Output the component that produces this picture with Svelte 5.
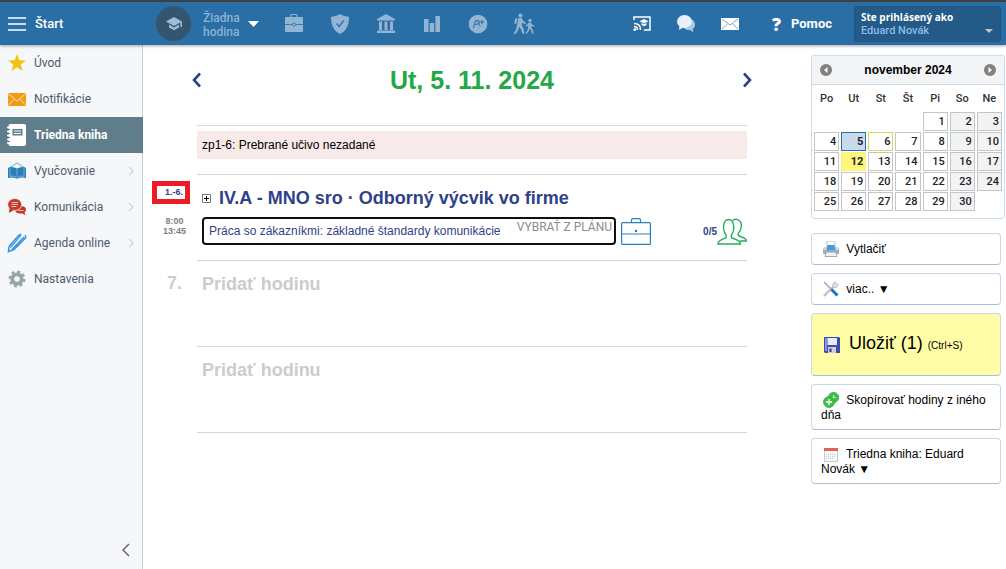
<script lang="ts">
  type Day = { n: number; kind?: "selected" | "today" | "marked" };

  const menu = [
    { id: "star", label: "Úvod" },
    { id: "mail", label: "Notifikácie" },
    { id: "book", label: "Triedna kniha", active: true },
    { id: "teach", label: "Vyučovanie", sub: true },
    { id: "chat", label: "Komunikácia", sub: true },
    { id: "pen", label: "Agenda online", sub: true },
    { id: "gear", label: "Nastavenia" },
  ];

  const tools = [
    { id: "case", label: "Učivo" },
    { id: "shield", label: "Dochádzka" },
    { id: "bank", label: "Škola" },
    { id: "bars", label: "Výsledky" },
    { id: "grade", label: "Známky" },
    { id: "walk", label: "Akcie" },
  ];

  const weekdays = ["Po", "Ut", "St", "Št", "Pi", "So", "Ne"];
  const kinds: Record<number, Day["kind"]> = {
    5: "selected",
    6: "marked",
    12: "today",
  };

  // 1 November 2024 is a Friday
  const cells: (Day | null)[] = Array.from({ length: 35 }, (_, i) => {
    const n = i - 3;
    return n >= 1 && n <= 30 ? { n, kind: kinds[n] } : null;
  });
  const weeks = [0, 1, 2, 3, 4].map((w) => cells.slice(w * 7, w * 7 + 7));

  let topic = $state("Práca so zákazníkmi: základné štandardy komunikácie");
</script>

<div class="page">
  <header class="topbar">
    <button class="brand">
      <svg width="18" height="14" viewBox="0 0 18 14" stroke="#fff" stroke-width="1.600">
        <path d="M0 1h18M0 7h18M0 13h18" />
      </svg>
      <span>Štart</span>
    </button>

    <button class="lesson">
      <span class="lesson-icon">
        <svg width="16" height="14" viewBox="0 0 16 14" fill="#9dbdd6">
          <path d="M8 0L0 4.5 8 9l6.4-3.6V10H16V4.5z" />
          <path d="M3 7.6v2.9L8 13.3l5-2.8V7.6L8 10.4z" />
        </svg>
      </span>
      <span class="lesson-text">Žiadna<br />hodina</span>
      <svg width="11" height="6" viewBox="0 0 11 6" fill="#fff"><path d="M0 0h11L5.500 6z" /></svg>
    </button>

    <nav class="tools" aria-label="Nástroje">
      {#each tools as tool}
        <a href="#{tool.id}" aria-label={tool.label}>
          <svg width="22" height="22" viewBox="0 0 22 22" fill="#92b5d3">
            {#if tool.id === "case"}
              <path d="M8 4V2.500Q8 1.500 9 1.500h4q1 0 1 1V4" fill="none" stroke="#92b5d3" stroke-width="1.200" />
              <rect x="2" y="4" width="18" height="15" rx="1" />
              <path d="M2 11.500h18" stroke="#2a6ea6" stroke-width=".8" />
              <circle cx="11" cy="11.500" r="1.500" stroke="#2a6ea6" stroke-width=".8" />
            {:else if tool.id === "shield"}
              <path d="M11 1c3 2 6 2.700 9 2.700 0 9-3 14.500-9 17.300-6-2.800-9-8.300-9-17.300C5 3.700 8 3 11 1z" />
              <path d="M7.500 10.500l2.700 3 4.600-6.200" fill="none" stroke="#2a6ea6" stroke-width="1.300" />
            {:else if tool.id === "bank"}
              <path d="M11 1l9 5v1.500H2V6zM4 8.500h3V17H4zM9.500 8.500h3V17h-3zM15 8.500h3V17h-3zM2 17.500h18V20H2z" />
            {:else if tool.id === "bars"}
              <path d="M3 6h4.500v13H3zM8.700 10h4.500v9H8.700zM14.400 3h4.600v16h-4.600z" />
            {:else if tool.id === "grade"}
              <circle cx="11" cy="11" r="9.300" />
              <path d="M6.500 15l1.700-7c1.500-.8 3 0 4.800 5.500M7.500 11.500l4.500-.7M8.500 8c3-1.500 5 0 3.500 2.500M13 9h4M15 7v4" fill="none" stroke="#2a6ea6" />
            {:else}
              <circle cx="7.500" cy="2.500" r="2.100" />
              <circle cx="17" cy="7.300" r="1.600" />
              <path d="M5.500 5h3l2 3 2.500 2.200-1 1.300-2.800-2-.3 3 1.600 3 1 5H9.300L8.200 16.500 6 14l-1 3.500L2.500 21H.5L3 16.500z" />
              <path d="M2.500 5l2 .5L3.200 11l-2-.5z" />
              <path d="M15.800 9.500h2l1.500 2.300 2.200 1-.5 1-2.600-.8v2l1.500 2 .8 3.500h-1.600l-.8-3-1.800-1.700-.7 2.500-2 2.200h-1.600l2.300-3.200.8-5-1.800 1.500-.8-.8z" />
            {/if}
          </svg>
        </a>
      {/each}
    </nav>

    <nav class="quick" aria-label="Rýchle odkazy">
      <a href="#cast" aria-label="Projekcia">
        <svg width="18" height="16" viewBox="0 0 18 16" fill="none" stroke="#fff" stroke-width="1.500">
          <path d="M1 4V1h16v13h-6" />
          <path d="M1 7.500c4 0 6.500 2.500 6.500 6.500M1 10.500c2 0 3.500 1.500 3.500 3.500" />
          <circle cx="1.800" cy="13.600" r=".7" />
          <path d="M11 3l4.500 2.200L11 7.500 6.500 5.200zM8.500 7v2L11 10.300 13.500 9V7L11 8.300z" fill="#fff" stroke="none" />
        </svg>
      </a>
      <a href="#sms" aria-label="Správy">
        <svg width="18" height="18" viewBox="0 0 18 18">
          <path d="M12 4c4 0 6 2.500 6 5.500 0 2-.8 3.500-2.200 4.500l.6 3.500-3.400-2.500C9 15.500 6 13 6 10z" fill="#a9c8e2" />
          <ellipse cx="7.500" cy="6.500" rx="7.500" ry="6.500" fill="#e9f2fa" />
          <path d="M2.500 10L2 15l5-3z" fill="#e9f2fa" />
        </svg>
      </a>
      <a href="#mail" aria-label="Pošta">
        <svg width="18" height="12" viewBox="0 0 18 12">
          <path d="M0 0h18v12H0z" fill="#fff" />
          <path d="M1 1l8 6 8-6M1 11l5.500-5M17 11l-5.500-5" fill="none" stroke="#7fa6c9" />
        </svg>
      </a>
      <a class="help" href="#help"><span class="mark">?</span>Pomoc</a>
    </nav>

    <button class="user">
      <span class="user-label">Ste prihlásený ako</span>
      <span class="user-name">
        Eduard Novák
        <svg width="8" height="4" viewBox="0 0 8 4" fill="#c9c5bd"><path d="M0 0h8L4 4z" /></svg>
      </span>
    </button>
  </header>

  <div class="body">
    <aside class="sidebar">
      <nav aria-label="Hlavné menu">
        {#each menu as item}
          <a class="item" class:active={item.active} href="#{item.id}">
            <svg class="item-icon" width="20" height="24" viewBox="0 0 20 24">
              {#if item.id === "star"}
                <path d="M10 3l2.300 6.200 6.700.2-5.300 4.200 1.900 6.400L10 16.300 4.400 20l1.900-6.400L1 9.400l6.700-.2z" fill="#f1c40f" />
              {:else if item.id === "mail"}
                <path d="M1 6h18v13H1z" fill="#f39c12" />
                <path d="M1 6.500l9 7.500 9-7.500M1 18.500l6.500-6.500M19 18.500L12.500 12" fill="none" stroke="#fbe3bd" />
              {:else if item.id === "book"}
                <rect x="1.500" y="1" width="17.500" height="22" rx="2" fill="#fff" />
                <path d="M0 4.500h3M0 8.500h3M0 12.500h3M0 16.500h3M0 20h3" stroke="#fff" stroke-width="1.500" />
                <path d="M1 6.500h2M1 10.500h2M1 14.500h2M1 18.500h2" stroke="#607d8b" />
                <path d="M5.500 6h10v6.500h-10z" fill="#607d8b" />
                <path d="M7 8h7M7 10.500h7" stroke="#fff" />
              {:else if item.id === "teach"}
                <path d="M2 9l8-5 8 5" fill="none" stroke="#69abd8" />
                <path d="M1 9c3-1.500 6-1 9 .5 3-1.500 6-2 9-.5v10c-3-1-6-.8-9 .7-3-1.500-6-1.700-9-.7z" fill="#2980b9" />
                <path d="M10 9.500V17M3 9v8.500c3-.8 5-.3 7 .8 2-1.100 4-1.600 7-.8V9" fill="none" stroke="#8fc0e2" stroke-width=".7" />
              {:else if item.id === "chat"}
                <path d="M11 12c5-2 8 0 8 2.500 0 1.200-.6 2-1.500 2.700l1 3-3.200-1.700C11 19 8 17.500 8 15z" fill="#c0392b" />
                <ellipse cx="7.700" cy="9.500" rx="7" ry="6" fill="#c0392b" stroke="#f5f6f8" stroke-width=".8" />
                <path d="M2.500 13L2 18l5-3z" fill="#c0392b" />
                <path d="M4.500 7.500h6.500M4.500 9.500h6.500M4.500 11.500h5M11.500 15.500h5" stroke="#f3cfcb" stroke-width=".9" />
              {:else if item.id === "pen"}
                <path d="M2 15.500L11 5l3-2M5 18.500L17 6M2 15.500L1.500 20.500 7 18.500 18.500 7V4" fill="none" stroke="#3c96dc" stroke-width="1.600" />
                <path d="M3.500 16.500L14 4" stroke="#3c96dc" stroke-width="1.200" />
              {:else}
                <circle cx="10" cy="12" r="4.700" fill="none" stroke="#95a5a6" stroke-width="3.800" />
                <circle cx="10" cy="12" r="7.300" fill="none" stroke="#95a5a6" stroke-width="2.400" stroke-dasharray="2.900 2.830" />
              {/if}
            </svg>
            <span>{item.label}</span>
            {#if item.sub}
              <svg class="more" width="6" height="10" viewBox="0 0 6 10" fill="none" stroke="#d0d3d8" stroke-width="1.200">
                <path d="M1 1l4 4-4 4" />
              </svg>
            {/if}
          </a>
        {/each}
      </nav>
      <button class="collapse" aria-label="Zbaliť menu">
        <svg width="9" height="14" viewBox="0 0 9 14" fill="none" stroke="#666" stroke-width="1.500">
          <path d="M8 1L2 7l6 6" />
        </svg>
      </button>
    </aside>

    <main class="diary">
      <div class="date">
        <button aria-label="Predchádzajúci deň">
          <svg width="11" height="16" viewBox="0 0 11 16" fill="none" stroke="#2f4189" stroke-width="2.600">
            <path d="M9 1.500L3 8l6 6.500" />
          </svg>
        </button>
        <h1>Ut, 5. 11. 2024</h1>
        <button aria-label="Nasledujúci deň">
          <svg width="11" height="16" viewBox="0 0 11 16" fill="none" stroke="#2f4189" stroke-width="2.600">
            <path d="M2 1.500L8 8l-6 6.500" />
          </svg>
        </button>
      </div>

      <div class="notice"><p>zp1-6: Prebrané učivo nezadané</p></div>

      <section class="row">
        <div class="hours">
          <span class="range">1.-6.</span>
          <span class="time">8:00<br />13:45</span>
        </div>
        <div class="content">
          <div class="subject">
            <button class="expand" aria-label="Rozbaliť">
              <svg width="9" height="9" viewBox="0 0 9 9" fill="none">
                <path d="M.5.5h8v8h-8z" stroke="#777" />
                <path d="M2 4.500h5M4.500 2v5" stroke="#000" />
              </svg>
            </button>
            <h2>IV.A - MNO sro · Odborný výcvik vo firme</h2>
          </div>
          <div class="entry">
            <div class="field">
              <input type="text" aria-label="Učivo" bind:value={topic} />
              <button class="plan">VYBRAŤ Z PLÁNU</button>
            </div>
            <button class="icon" aria-label="Materiály">
              <svg width="30" height="27" viewBox="0 0 30 27" fill="none" stroke="#2980b9" stroke-width="1.200">
                <rect x=".6" y="4.600" width="28.800" height="21.800" rx="1" />
                <path d="M10.500 4.500V2q0-1.400 1.400-1.400h6.200q1.400 0 1.400 1.400v2.500M.6 16h28.800" />
                <circle cx="15" cy="13" r=".7" />
              </svg>
            </button>
            <button class="attendance" aria-label="Dochádzka 0/5">
              <span>0/5</span>
              <svg width="30" height="27" viewBox="0 0 30 27" fill="none" stroke="#27ae60" stroke-width="1.400">
                <path d="M1 26c0-4 4-4.500 7.500-6 1-.5 1-2.500 0-4C5.500 12 5.500 1.700 11.500 1.500 18 1.500 17.500 12.500 15 16c-1 1.500-1 3.500 0 4 4 1.500 8 2 8.500 6z" />
                <path d="M15.500 2.500c2-1.500 5-1.500 7 .2C26 6 24 12.500 21.500 15c-.7 1.500-.5 2.500.5 3 3 1.500 7 1.500 7.500 5H23" />
              </svg>
            </button>
          </div>
        </div>
      </section>

      <section class="row">
        <div class="hours"><span class="number">7.</span></div>
        <div class="content"><button class="add">Pridať hodinu</button></div>
      </section>

      <section class="row last">
        <div class="hours"></div>
        <div class="content"><button class="add">Pridať hodinu</button></div>
      </section>
    </main>

    <aside class="side">
      <div class="calendar">
        <div class="month">
          <button aria-label="Predchádzajúci mesiac">
            <svg width="12" height="12" viewBox="0 0 12 12">
              <circle cx="6" cy="6" r="6" fill="#808080" /><path d="M7.500 3v6L4 6z" fill="#fff" />
            </svg>
          </button>
          <span>november 2024</span>
          <button aria-label="Nasledujúci mesiac">
            <svg width="12" height="12" viewBox="0 0 12 12">
              <circle cx="6" cy="6" r="6" fill="#808080" /><path d="M4.500 3v6L8 6z" fill="#fff" />
            </svg>
          </button>
        </div>
        <table>
          <thead>
            <tr>
              {#each weekdays as name}<th>{name}</th>{/each}
            </tr>
          </thead>
          <tbody>
            {#each weeks as week}
              <tr>
                {#each week as day, i}
                  <td>
                    {#if day}
                      <a class="day {day.kind ?? ''}" class:weekend={i > 4} href="#{day.n}">{day.n}</a>
                    {/if}
                  </td>
                {/each}
              </tr>
            {/each}
          </tbody>
        </table>
      </div>

      <div class="actions">
        <button>
          <svg width="16" height="16" viewBox="0 0 16 16">
            <path d="M4 0h8v7H4z" fill="#fff" stroke="#aab4c2" stroke-width=".8" />
            <path d="M1 6h14l1 3v4H0V9z" fill="#a3adba" />
            <path d="M1 6h14v3H1z" fill="#cdd4dd" />
            <path d="M4.500 4h7l1 5h-9z" fill="#3f9be6" />
            <path d="M3 11h10l1 4.500H2z" fill="#eef2f6" stroke="#8b95a5" stroke-width=".8" />
          </svg>
          Vytlačiť
        </button>
        <button>
          <svg width="16" height="16" viewBox="0 0 16 16" fill="none">
            <path d="M1 15L11 5" stroke="#b9bfc6" stroke-width="2.200" />
            <path d="M10 5.500a3 3 0 0 1 3-4.500l-1 2.500L13.500 4 15 2.500a3 3 0 0 1-3.500 4z" fill="#e4e7ea" stroke="#a7adb4" stroke-width=".7" />
            <path d="M1 1l8 8" stroke="#9aa3ad" stroke-width="1.500" />
            <path d="M8.500 8.500l6 6" stroke="#1f6fc0" stroke-width="3" />
          </svg>
          viac.. ▼
        </button>
        <button class="save">
          <svg width="16" height="16" viewBox="0 0 16 16">
            <path d="M0 0h15l1 1v15H1l-1-1z" fill="#3f4bab" />
            <path d="M1 1h2v13H1z" fill="#8792e0" />
            <path d="M3.500 1h9.500v7H3.500z" fill="#e6ecf8" />
            <path d="M4 10h8v6H4z" fill="#c9cede" />
            <path d="M5.500 11.500h2V15h-2z" fill="#2b3590" />
          </svg>
          Uložiť (1) <small>(Ctrl+S)</small>
        </button>
        <button>
          <svg width="16" height="16" viewBox="0 0 16 16">
            <circle cx="10.500" cy="5.500" r="5.200" fill="#3cc24a" stroke="#2a9f38" stroke-width=".6" />
            <path d="M10.500 3v4M9 5.500h4" stroke="#c9f2cc" />
            <circle cx="6" cy="10" r="5.500" fill="#3fc04b" stroke="#239a33" stroke-width=".6" />
            <path d="M6 7v6M3 10h6" stroke="#fff" stroke-width="1.300" />
          </svg>
          Skopírovať hodiny z iného dňa
        </button>
        <button>
          <svg width="16" height="16" viewBox="0 0 16 16">
            <path d="M1.500 2.500h13v13h-13z" fill="#fafafa" stroke="#c6c6ce" />
            <path d="M1 2h14v3H1z" fill="#e0605a" />
            <path d="M3 8.500h10M3 10.500h10M3 12.500h8" stroke="#c3c9d6" stroke-dasharray="1 1" />
          </svg>
          Triedna kniha: Eduard Novák ▼
        </button>
      </div>
    </aside>
  </div>
</div>

<style>
  :global(body) {
    background: #fff;
  }

  .page {
    min-height: 100vh;
    display: flex;
    flex-direction: column;
    font-family: "Liberation Sans", Arial, sans-serif;
    font-size: 12px;
    color: #000;
  }

  button {
    margin: 0;
    padding: 0;
    border: 0;
    background: none;
    color: inherit;
    font: inherit;
    cursor: pointer;
  }

  a {
    color: inherit;
    text-decoration: none;
  }

  svg {
    display: block;
    flex-shrink: 0;
  }

  .topbar {
    display: flex;
    align-items: center;
    height: 43px;
    padding-right: 5px;
    border-top: 2px solid #404040;
    background: #2a6ea6;
    box-shadow: 0 1px 3px rgba(0, 0, 0, 0.35);
    color: #fff;
    font-family: Roboto, sans-serif;
    position: relative;
  }

  .brand {
    display: flex;
    align-items: center;
    gap: 9px;
    width: 148px;
    padding-left: 8px;
    font-size: 13px;
    font-weight: 500;
  }

  .lesson {
    display: flex;
    align-items: center;
    margin-left: 8px;
    text-align: left;
  }

  .lesson-icon {
    display: flex;
    align-items: center;
    justify-content: center;
    width: 35px;
    height: 35px;
    border-radius: 50%;
    background: #34556f;
  }

  .lesson-text {
    margin: 2px 8px 0 12px;
    font-size: 12px;
    line-height: 14px;
    font-weight: 500;
    color: #8cb1d1;
  }

  .tools {
    display: flex;
    gap: 24px;
    margin-left: 24px;
  }

  .quick {
    display: flex;
    align-items: center;
    gap: 26px;
    margin-left: auto;
  }

  .help {
    display: flex;
    align-items: center;
    gap: 10px;
    margin: 0 22px 0 7px;
    font-size: 13px;
    font-weight: 700;
  }

  .mark {
    font-family: "Open Sans", sans-serif;
    font-size: 18px;
    line-height: 20px;
    font-weight: 800;
  }

  .user {
    display: flex;
    flex-direction: column;
    justify-content: center;
    width: 147px;
    height: 36px;
    padding: 0 7px 0 6px;
    border: 1px solid #1f5583;
    border-radius: 3px;
    background: #235a88;
    text-align: left;
  }

  .user-label {
    font-family: "Open Sans", sans-serif;
    font-size: 10px;
    line-height: 14px;
    font-weight: 700;
  }

  .user-name {
    display: flex;
    align-items: center;
    justify-content: space-between;
    width: 100%;
    font-size: 11px;
    line-height: 14px;
    font-weight: 500;
    color: #8fbbe6;
  }

  .body {
    flex: 1;
    display: flex;
  }

  .sidebar {
    display: flex;
    flex-direction: column;
    justify-content: space-between;
    flex-shrink: 0;
    width: 142px;
    border-right: 1px solid #ccd0d4;
    background: #f5f7f9;
    font-family: Roboto, sans-serif;
  }

  .item {
    display: flex;
    align-items: center;
    gap: 7px;
    height: 36px;
    padding: 0 8px 0 7px;
    color: #4f5b6b;
  }

  .item.active {
    margin-right: -1px;
    background: #607d8b;
    color: #fff;
    font-weight: 700;
  }

  .more {
    margin-left: auto;
  }

  .collapse {
    align-self: flex-end;
    padding: 12px;
  }

  .diary {
    flex: 1;
    min-width: 0;
    padding-right: 64px;
  }

  .date {
    display: flex;
    align-items: center;
    justify-content: space-between;
    height: 70px;
    margin: 0 -6px 10px 48px;
  }

  h1 {
    margin: 0;
    font-size: 25px;
    line-height: 30px;
    color: #24a845;
  }

  .notice {
    margin-left: 54px;
    padding: 5px 0 15px;
    border-top: 1px solid #cbd9e6;
  }

  .notice p {
    margin: 0;
    padding: 0 5px;
    line-height: 28px;
    background: #f8eae9;
  }

  .row {
    display: flex;
    height: 86px;
  }

  .row.last {
    height: 87px;
  }

  .hours {
    display: flex;
    flex-direction: column;
    align-items: center;
    flex-shrink: 0;
    width: 54px;
    padding-left: 9px;
    box-sizing: border-box;
  }

  .content {
    flex: 1;
    min-width: 0;
    padding-left: 5px;
    box-sizing: border-box;
    border-top: 1px solid #c8d8e6;
  }

  .last .content {
    border-bottom: 1px solid #c8d8e6;
  }

  .range {
    align-self: flex-start;
    width: 38px;
    margin-top: 7px;
    padding-right: 2px;
    box-sizing: border-box;
    border: 5px solid #ed1c24;
    line-height: 13px;
    font-size: 9px;
    font-weight: 700;
    text-align: right;
    color: #2f4189;
  }

  .time {
    margin-top: 12px;
    font-size: 9px;
    line-height: 10px;
    font-weight: 700;
    text-align: center;
    color: #808080;
  }

  .number,
  .add {
    margin-top: 13px;
    font-size: 18px;
    line-height: 20px;
    font-weight: 700;
    color: #ccc;
  }

  .subject {
    display: flex;
    align-items: center;
    gap: 8px;
    margin-top: 12px;
  }

  h2 {
    margin: 0;
    font-size: 18px;
    line-height: 22px;
    color: #2f4189;
  }

  .entry {
    display: flex;
    align-items: center;
    gap: 5px;
    margin-top: 8px;
  }

  .field {
    flex: 1;
    display: flex;
    align-items: flex-start;
    height: 28px;
    box-sizing: border-box;
    border: 2px solid #101010;
    border-radius: 4px;
  }

  .field input {
    flex: 1;
    align-self: stretch;
    min-width: 0;
    padding: 0 0 0 5px;
    border: 0;
    outline: 0;
    background: none;
    font: inherit;
    color: #2f4189;
  }

  .plan {
    padding: 0 2px 0 0;
    font-family: Roboto, sans-serif;
    line-height: 16px;
    color: #8c8c8c;
  }

  .attendance {
    display: flex;
    align-items: center;
    justify-content: flex-end;
    width: 91px;
    font-size: 10px;
    font-weight: 700;
    color: #2f4189;
  }

  .side {
    flex-shrink: 0;
    width: 194px;
    margin-right: 1px;
    padding-top: 10px;
  }

  .calendar {
    padding-bottom: 6px;
    border: 1px solid #c9dcec;
    border-radius: 3px;
  }

  .month {
    display: flex;
    align-items: center;
    justify-content: space-between;
    height: 28px;
    padding: 0 8px;
    border-bottom: 1px solid #c9dcec;
    background: #f2f4f6;
    font-weight: 700;
  }

  table {
    width: 100%;
    table-layout: fixed;
    border-collapse: separate;
    border-spacing: 2px 1px;
  }

  th,
  td {
    padding: 0;
  }

  th {
    height: 25px;
    font-family: Roboto, sans-serif;
    font-size: 11px;
    font-weight: 500;
    color: #333;
  }

  .day {
    display: block;
    padding-right: 2px;
    border: 1px solid #c5c5c5;
    font-family: Roboto, sans-serif;
    font-size: 11px;
    font-weight: 500;
    line-height: 17px;
    text-align: right;
    color: #222;
  }

  .weekend {
    background: #f2f3f5;
  }

  .selected {
    border-color: #2a6ea6;
    background: #c9dbea;
    font-weight: 700;
  }

  .marked {
    border-color: #d9d960;
  }

  .today {
    border-color: #f8f087;
    background: #fff67a;
    font-weight: 700;
  }

  .actions {
    display: flex;
    flex-direction: column;
    gap: 8px;
    margin: 14px 4px 0 0;
  }

  .actions button {
    padding: 7px 10px;
    border: 1px solid #c5d8ea;
    border-bottom-color: #a9bfd2;
    border-radius: 4px;
    background: #fff;
    text-align: left;
    line-height: 14px;
  }

  .actions svg {
    display: inline-block;
    margin: 0 4px 0 2px;
    vertical-align: -4px;
  }

  .actions .save {
    padding: 20px 10px;
    background: #fffda6;
    font-size: 18px;
    line-height: 18px;
  }

  .actions button {
    padding-left: 9px;
  }

  .save small {
    font-size: 10px;
  }
</style>
